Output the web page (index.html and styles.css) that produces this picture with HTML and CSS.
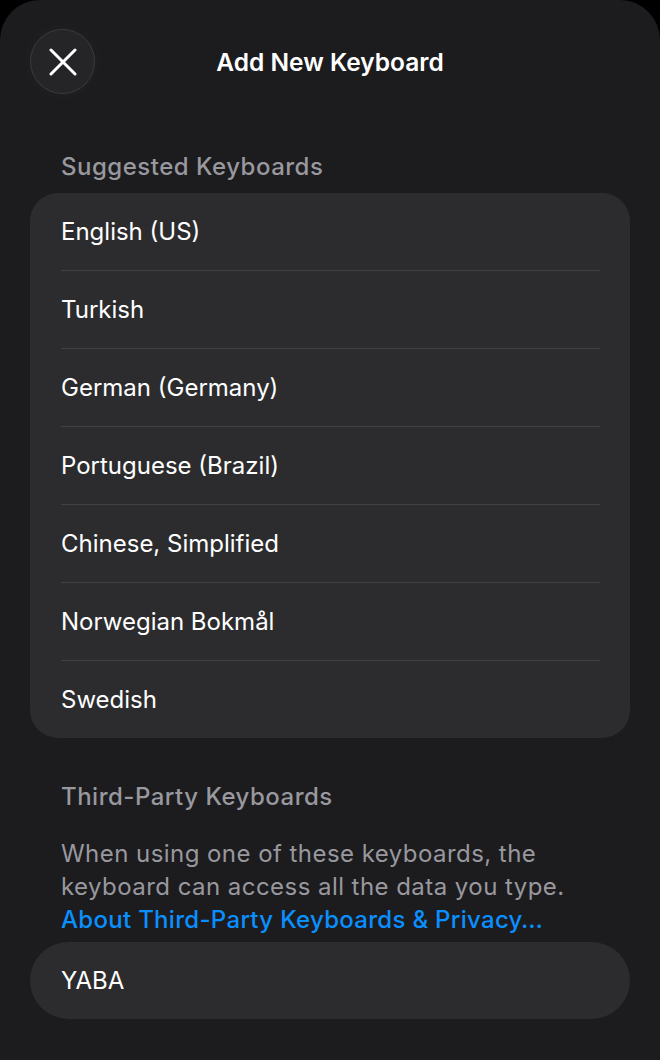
FILE: index.html
```html
<!DOCTYPE html>
<html lang="en">
<head>
<meta charset="utf-8">
<title>Add New Keyboard</title>
<link rel="stylesheet" href="styles.css">
</head>
<body>
<div class="sheet">
  <header class="nav">
    <button class="close" aria-label="Close">
      <svg width="28" height="28" viewBox="0 0 28 28"><path d="M2 2 L26 26 M26 2 L2 26" stroke="#fff" stroke-width="3" stroke-linecap="round" fill="none"/></svg>
    </button>
    <h1 class="title">Add New Keyboard</h1>
    <span></span>
  </header>

  <h2 class="section-title first">Suggested Keyboards</h2>
  <ul class="card">
    <li class="row">English (US)</li>
    <li class="row">Turkish</li>
    <li class="row">German (Germany)</li>
    <li class="row">Portuguese (Brazil)</li>
    <li class="row">Chinese, Simplified</li>
    <li class="row">Norwegian Bokmål</li>
    <li class="row">Swedish</li>
  </ul>

  <h2 class="section-title second">Third-Party Keyboards</h2>
  <p class="note">When using one of these keyboards, the keyboard can access all the data you type. <a class="link" href="#">About Third-Party Keyboards &amp; Privacy…</a></p>
  <ul class="card pill">
    <li class="row">YABA</li>
  </ul>
</div>
</body>
</html>
```

FILE: styles.css
```css
* { box-sizing: border-box; }
html, body {
  margin: 0;
  padding: 0;
  background: #000;
}
body {
  font-family: Inter, "Noto Sans", "Liberation Sans", sans-serif;
  color: #fff;
  -webkit-font-smoothing: antialiased;
}
.sheet {
  width: 660px;
  min-height: 1060px;
  background: #1c1c1e;
  border-radius: 40px 40px 0 0;
  padding-top: 29px;
  overflow: hidden;
}
.nav {
  display: grid;
  grid-template-columns: 65px 1fr 65px;
  align-items: center;
  padding: 0 30px;
  height: 65px;
}
.close {
  width: 65px;
  height: 65px;
  border-radius: 50%;
  background: #252527;
  border: 1px solid #3c3c3f;
  box-shadow: 0 0 18px rgba(255,255,255,0.03);
  display: flex;
  align-items: center;
  justify-content: center;
  padding: 0;
  margin: 0;
}
.close svg { display: block; }
.title {
  margin: 0;
  text-align: center;
  font-size: 24.5px;
  font-weight: 600;
  letter-spacing: 0;
  line-height: 28px;
  padding-top: 1px;
}
.section-title {
  margin: 0;
  padding: 0 61px;
  font-size: 24px;
  font-weight: 500;
  line-height: 28px;
  color: #98989e;
  letter-spacing: 0.5px;
}
.section-title.first { margin-top: 59px; margin-bottom: 12px; }
.section-title.second { margin-top: 45px; }
.card {
  list-style: none;
  margin: 0 30px;
  padding: 0 30px 0 31px;
  background: #2c2c2e;
  border-radius: 28px;
}
.row {
  height: 78px;
  display: flex;
  align-items: center;
  font-size: 24px;
  letter-spacing: 0;
  border-top: 1px solid #414145;
}
.row:first-child { border-top: none; height: 77px; }
.pill {
  border-radius: 39px;
}
.pill .row { height: 77px; }
.note {
  margin: 26px 0 6px;
  padding: 0 78px 0 61px;
  font-size: 24px;
  line-height: 33px;
  color: #98989e;
  letter-spacing: 0.45px;
}
.link {
  display: block;
  color: #0a8fff;
  text-decoration: none;
  font-weight: 500;
  letter-spacing: 0.3px;
  white-space: nowrap;
}
```
